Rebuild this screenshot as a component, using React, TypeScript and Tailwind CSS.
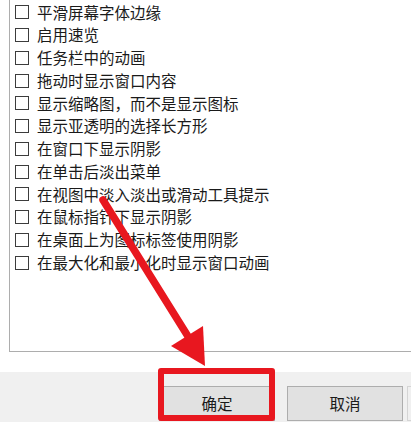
const options = [
  "平滑屏幕字体边缘",
  "启用速览",
  "任务栏中的动画",
  "拖动时显示窗口内容",
  "显示缩略图，而不是显示图标",
  "显示亚透明的选择长方形",
  "在窗口下显示阴影",
  "在单击后淡出菜单",
  "在视图中淡入淡出或滑动工具提示",
  "在鼠标指针下显示阴影",
  "在桌面上为图标标签使用阴影",
  "在最大化和最小化时显示窗口动画",
];

const font = { fontFamily: '"Noto Sans CJK SC", "Noto Sans", sans-serif' };

export default function App() {
  return (
    <div className="relative w-[411px] h-[422px] overflow-hidden bg-white text-[#1a1a1a]" style={font}>
      <div className="flex flex-col h-full">
        {/* options list */}
        <div className="ml-[9px] w-[420px] h-[352px] shrink-0 border-l border-b border-[#adadad] bg-white pt-px">
          <ul className="flex flex-col">
            {options.map((label) => (
              <li key={label} className="flex items-center h-[22.75px] pl-[5px]">
                <span className="w-[14px] h-[14px] border border-[#3c3c3c] bg-white shrink-0" />
                <span className="ml-[8px] text-[15.5px] leading-none whitespace-nowrap">{label}</span>
              </li>
            ))}
          </ul>
        </div>
        <div className="h-[20px] shrink-0" />
        {/* footer buttons */}
        <div className="flex-1 bg-[#f0f0f0] flex items-start pt-[14px] pl-[159px]">
          <button className="w-[116px] h-[35px] border border-[#adadad] bg-[#e1e1e1] text-[15.5px] shrink-0">
            确定
          </button>
          <button className="ml-[12px] w-[116px] h-[35px] border border-[#adadad] bg-[#e1e1e1] text-[15.5px] shrink-0">
            取消
          </button>
          <div className="ml-[4px] w-[116px] h-[35px] border border-[#d4d4d4] bg-[#f0f0f0] shrink-0" />
        </div>
      </div>

      {/* red highlight frame */}
      <div className="absolute left-[158px] top-[368px] w-[117px] h-[53px] border-[6px] border-[#e8171f] rounded-[3px]" />

      {/* red arrow */}
      <svg className="absolute inset-0 pointer-events-none" width="411" height="422" viewBox="0 0 411 422">
        <line x1="103" y1="200" x2="189" y2="338" stroke="#e8171f" strokeWidth="7.5" strokeLinecap="round" />
        <polygon points="171,346 203,326 205,366" fill="#e8171f" />
      </svg>
    </div>
  );
}
